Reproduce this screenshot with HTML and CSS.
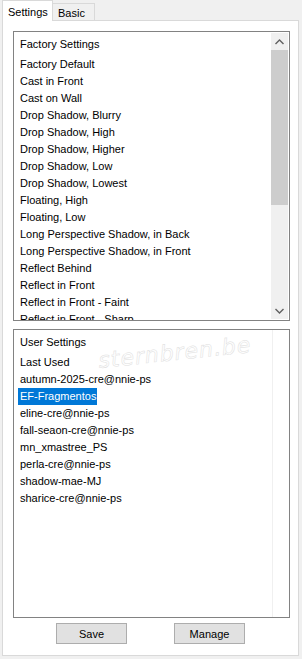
FILE: index.html
```html
<!DOCTYPE html>
<html>
<head>
<meta charset="utf-8">
<link rel="stylesheet" href="styles.css">
</head>
<body>
<div class="window">
  <div class="tabs">
    <div class="tab active">Settings</div>
    <div class="tab">Basic</div>
  </div>
  <div class="panel">
    <div class="list list-factory">
      <div class="items">
        <div class="item header">Factory Settings</div>
        <div class="item">Factory Default</div>
        <div class="item">Cast in Front</div>
        <div class="item">Cast on Wall</div>
        <div class="item">Drop Shadow, Blurry</div>
        <div class="item">Drop Shadow, High</div>
        <div class="item">Drop Shadow, Higher</div>
        <div class="item">Drop Shadow, Low</div>
        <div class="item">Drop Shadow, Lowest</div>
        <div class="item">Floating, High</div>
        <div class="item">Floating, Low</div>
        <div class="item">Long Perspective Shadow, in Back</div>
        <div class="item">Long Perspective Shadow, in Front</div>
        <div class="item">Reflect Behind</div>
        <div class="item">Reflect in Front</div>
        <div class="item">Reflect in Front - Faint</div>
        <div class="item">Reflect in Front - Sharp</div>
      </div>
      <div class="scrollbar">
        <div class="arrow">
          <svg width="9" height="6" viewBox="0 0 9 6"><path d="M0.5 5 L4.5 1 L8.5 5" fill="none" stroke="#606060" stroke-width="1.4"/></svg>
        </div>
        <div class="track">
          <div class="thumb"></div>
        </div>
        <div class="arrow">
          <svg width="9" height="6" viewBox="0 0 9 6"><path d="M0.5 1 L4.5 5 L8.5 1" fill="none" stroke="#606060" stroke-width="1.4"/></svg>
        </div>
      </div>
    </div>
    <div class="list list-user">
      <div class="items">
        <div class="item header">User Settings</div>
        <div class="item">Last Used</div>
        <div class="item">autumn-2025-cre@nnie-ps</div>
        <div class="item"><span class="selected">EF-Fragmentos</span></div>
        <div class="item">eline-cre@nnie-ps</div>
        <div class="item">fall-seaon-cre@nnie-ps</div>
        <div class="item">mn_xmastree_PS</div>
        <div class="item">perla-cre@nnie-ps</div>
        <div class="item">shadow-mae-MJ</div>
        <div class="item">sharice-cre@nnie-ps</div>
      </div>
      <div class="faint-col"></div>
    </div>
    <div class="buttons">
      <button class="btn">Save</button>
      <button class="btn">Manage</button>
    </div>
  </div>
  <div class="watermark">sternbren.be</div>
</div>
</body>
</html>
```
FILE: styles.css
```css
html, body {
  margin: 0;
  padding: 0;
}
body {
  background: #f0f0f0;
  font-family: "Liberation Sans", Arial, sans-serif;
  font-size: 11px;
  color: #000;
}
.window {
  position: relative;
  width: 302px;
  height: 659px;
  overflow: hidden;
}
.tabs {
  display: flex;
  align-items: flex-end;
  height: 20px;
  padding-left: 2px;
  position: relative;
  z-index: 2;
}
.tab {
  height: 17px;
  box-sizing: border-box;
  border: 1px solid #d9d9d9;
  border-bottom: none;
  background: #f0f0f0;
  padding: 2px 4px 0 5px;
  line-height: 14px;
  font-size: 11px;
}
.tab.active {
  height: 21px;
  margin-bottom: -1px;
  background: #fff;
  padding: 4px 6px 0 5px;
  border-color: #d9d9d9;
  width: 51px;
}
.tab + .tab {
  border-left: none;
  width: 42px;
}
.panel {
  margin: 0 3px 0 2px;
  height: 636px;
  box-sizing: border-box;
  border: 1px solid #d9d9d9;
  background: #fff;
  padding: 10px 8px 0 10px;
  display: flex;
  flex-direction: column;
}
.list {
  border: 1px solid #828282;
  background: #fff;
  display: flex;
  position: relative;
  overflow: hidden;
}
.list-factory {
  height: 290px;
  box-sizing: border-box;
}
.list-user {
  height: 289px;
  box-sizing: border-box;
  margin-top: 8px;
}
.items {
  flex: 1;
  padding: 4px 0 0 6px;
  overflow: hidden;
}
.item {
  height: 17px;
  line-height: 17px;
  white-space: nowrap;
}
.item.header {
  margin-bottom: 3px;
}
.selected {
  display: inline-block;
  background: #0078d7;
  color: #fff;
  margin-left: -2px;
  padding: 0 2px 0 2px;
  width: 75px;
}
.scrollbar {
  width: 17px;
  margin: 1px 1px 1px 0;
  background: #f0f0f0;
  display: flex;
  flex-direction: column;
}
.arrow {
  height: 17px;
  display: flex;
  align-items: center;
  justify-content: center;
}
.track {
  flex: 1;
  position: relative;
}
.thumb {
  margin-top: 0;
  height: 155px;
  background: #cdcdcd;
}
.faint-col {
  width: 1px;
  margin-right: 16px;
  background: #f0f0f0;
}
.buttons {
  display: flex;
  gap: 47px;
  padding-left: 43px;
  margin-top: 5px;
}
.btn {
  width: 71px;
  height: 21px;
  box-sizing: border-box;
  border: 1px solid #adadad;
  background: #e1e1e1;
  font-family: "Liberation Sans", Arial, sans-serif;
  font-size: 11px;
  color: #000;
  padding: 0;
}
.watermark {
  position: absolute;
  left: 98px;
  top: 340px;
  font-family: "DejaVu Sans", sans-serif;
  font-size: 22px;
  font-style: italic;
  color: transparent;
  -webkit-text-stroke: 0.5px #dedede;
  letter-spacing: 1px;
  transform: rotate(-6deg);
  pointer-events: none;
}
```
